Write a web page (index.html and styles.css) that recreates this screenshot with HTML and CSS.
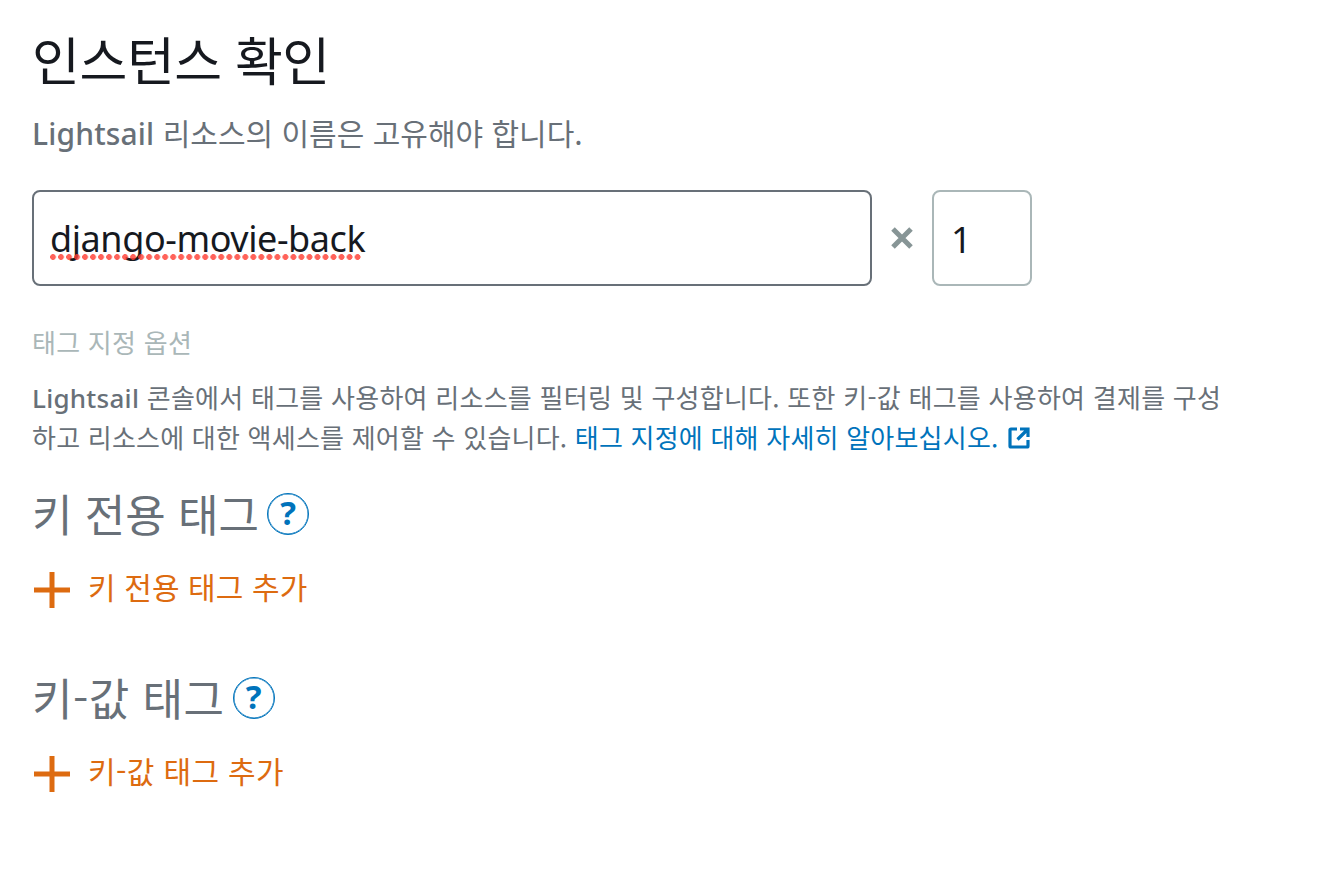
FILE: index.html
```html
<!DOCTYPE html>
<html lang="ko">
<head>
<meta charset="utf-8">
<title>인스턴스 확인</title>
<link rel="stylesheet" href="styles.css">
</head>
<body>
<main class="page">
  <h1 class="title">인스턴스 확인</h1>
  <p class="subtitle"><span class="latin">Lightsail</span> 리소스의 이름은 고유해야 합니다.</p>
  <div class="name-row">
    <div class="field name-field"><span class="misspelled">django-movie-back</span></div>
    <svg class="times" viewBox="0 0 24 24"><path d="M3 3L21 21M21 3L3 21"/></svg>
    <div class="field count-field"><span class="count">1</span></div>
  </div>
  <h2 class="tag-label">태그 지정 옵션</h2>
  <p class="description">
    <span class="line first"><span class="latin">Lightsail</span> 콘솔에서 태그를 사용하여 리소스를 필터링 및 구성합니다. 또한 키-값 태그를 사용하여 결제를 구성</span>
    <span class="line second">하고 리소스에 대한 액세스를 제어할 수 있습니다. <a class="link">태그 지정에 대해 자세히 알아보십시오.</a><svg class="external" viewBox="0 0 22 22"><path d="M9 2H3Q2 2 2 3V19Q2 20 3 20H19Q20 20 20 19V13M12 2H20V10M20 2L9.5 12.5"/></svg></span>
  </p>
  <section class="tag-group">
    <div class="tag-heading"><h3 class="tag-title key-title">키 전용 태그</h3><span class="help">?</span></div>
    <div class="add"><svg class="plus" viewBox="0 0 36 36"><path d="M18 0V36M0 18H36"/></svg><span class="add-text key-add">키 전용 태그 추가</span></div>
  </section>
  <section class="tag-group">
    <div class="tag-heading"><h3 class="tag-title value-title">키-값 태그</h3><span class="help">?</span></div>
    <div class="add"><svg class="plus" viewBox="0 0 36 36"><path d="M18 0V36M0 18H36"/></svg><span class="add-text value-add">키-값 태그 추가</span></div>
  </section>
</main>
</body>
</html>
```
FILE: styles.css
```css
* { box-sizing: border-box; }
body {
  margin: 0;
  background: #fff;
  color: #687078;
  font-family: "Noto Sans CJK KR", sans-serif;
}
h1, h2, h3, p { margin: 0; font-weight: 400; white-space: nowrap; }
.page { padding: 21px 32px 0; }
.title { height: 76px; line-height: 76px; font-size: 52px; letter-spacing: -.4px; word-spacing: -1px; color: #16191f; }
.subtitle { height: 60px; line-height: 70px; font-size: 30px; }
.latin { font-family: "Noto Sans", sans-serif; font-weight: 500; }
.subtitle .latin { letter-spacing: .15px; }
.name-row { display: flex; align-items: center; margin-top: 33px; }
.field {
  height: 96px;
  border: 2px solid #687078;
  border-radius: 8px;
  display: flex;
  align-items: center;
  padding: 2px 16px 0;
  color: #16191f;
  font: 36px "Noto Sans", sans-serif;
}
.name-field { width: 840px; }
.count-field { width: 100px; border-color: #aab7b8; padding-left: 17px; }
.misspelled { position: relative; line-height: 48px; white-space: nowrap; letter-spacing: -.42px; }
.misspelled::after {
  content: "";
  position: absolute;
  left: 0;
  bottom: 3px;
  width: 311px;
  height: 6px;
  background: radial-gradient(circle at 3px 3px, rgba(255, 59, 48, .8) 2.6px, transparent 3.2px) 0 0 / 8.02px 6px;
}
.times { width: 24px; height: 24px; margin: 0 18px; fill: none; stroke: #879596; stroke-width: 5; }
.tag-label { margin-top: 36px; height: 40px; line-height: 40px; font-size: 26px; letter-spacing: .25px; color: #aab7b8; }
.description { margin-top: 15px; font-size: 26px; }
.line { display: block; height: 40px; line-height: 40px; }
.first { letter-spacing: .26px; }
.second { letter-spacing: .22px; }
.link { color: #0073bb; }
.external { width: 22px; height: 22px; margin-left: 9px; vertical-align: -1px; fill: none; stroke: #0073bb; stroke-width: 3.2; }
.tag-group { height: 184px; padding-top: 24px; }
.tag-group:first-of-type { margin-top: 1px; }
.tag-heading { display: flex; align-items: center; height: 64px; gap: 8px; }
.tag-title { font-size: 44px; line-height: 62px; height: 64px; }
.value-title { letter-spacing: .5px; }
.help {
  width: 42px;
  height: 42px;
  border: 1px solid #0073bb;
  box-shadow: inset 0 0 0 .5px #0073bb;
  border-radius: 50%;
  color: #0073bb;
  font: bold 33px/38px "Noto Sans", sans-serif;
  text-align: center;
}
.add { display: flex; align-items: center; height: 48px; margin-top: 20px; padding-left: 2px; gap: 18px; color: #dd6b10; }
.add-text { font-size: 30px; line-height: 40px; height: 48px; white-space: nowrap; }
.key-add { letter-spacing: .1px; }
.value-add { letter-spacing: .35px; }
.plus { width: 36px; height: 36px; fill: none; stroke: #dd6b10; stroke-width: 5; }
```
